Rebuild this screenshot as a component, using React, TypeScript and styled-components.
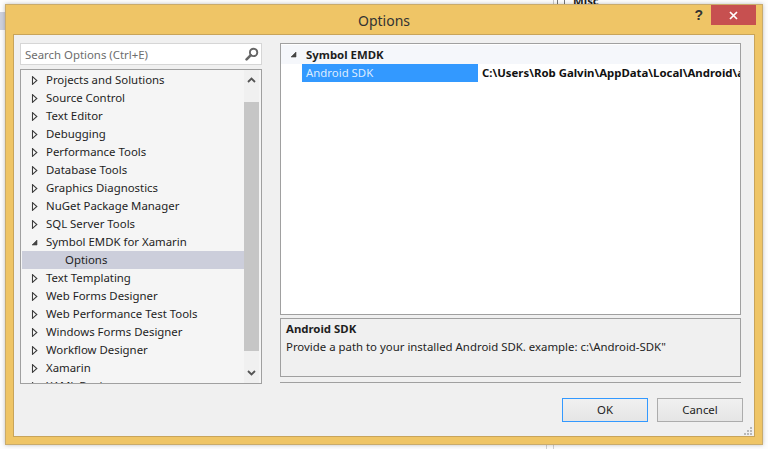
// @ts-nocheck
import React from 'react';
import styled, {createGlobalStyle} from 'styled-components';

const GlobalStyle = createGlobalStyle`
  html, body {
    margin: 0;
    padding: 0;
    background: #fdfdfd;
    overflow: hidden;
  }
  body {
    font-family: "Noto Sans", "Open Sans", sans-serif;
    font-size: 11.4px;
    color: #1e1e1e;
  }
`;

const treeItems = [
    {label: 'Projects and Solutions'},
    {label: 'Source Control'},
    {label: 'Text Editor'},
    {label: 'Debugging'},
    {label: 'Performance Tools'},
    {label: 'Database Tools'},
    {label: 'Graphics Diagnostics'},
    {label: 'NuGet Package Manager'},
    {label: 'SQL Server Tools'},
    {label: 'Symbol EMDK for Xamarin', open: true},
    {label: 'Options', child: true},
    {label: 'Text Templating'},
    {label: 'Web Forms Designer'},
    {label: 'Web Performance Test Tools'},
    {label: 'Windows Forms Designer'},
    {label: 'Workflow Designer'},
    {label: 'Xamarin'},
    {label: 'XAML Designer'},
];

const Arrow = ({open}) => open
    ? <ArrowSvg viewBox="0 0 7 9"><path d="M1 7 L6 2 L6 7 Z" fill="#444" stroke="#444" strokeWidth="0.6"/></ArrowSvg>
    : <ArrowSvg viewBox="0 0 7 9"><path d="M1.5 0.7 L5.8 4.5 L1.5 8.3 Z" fill="#fdfdfd" stroke="#3c3c3c" strokeWidth="1.1"/></ArrowSvg>;

const SearchIcon = () => (
    <SearchSvg viewBox="0 0 14 14">
        <circle cx="8.6" cy="5.4" r="3.7" fill="none" stroke="#666" strokeWidth="1.9"/>
        <path d="M5.8 8.2 L1.6 12.4" stroke="#666" strokeWidth="2.6" strokeLinecap="round"/>
    </SearchSvg>
);

const Chevron = ({down}) => (
    <ChevronSvg viewBox="0 0 9 6">
        <path d={down ? 'M1 1 L4.5 4.5 L8 1' : 'M1 5 L4.5 1.5 L8 5'} fill="none" stroke="#555" strokeWidth="1.8"/>
    </ChevronSvg>
);

const Grip = () => (
    <GripSvg viewBox="0 0 8 8">
        {[[6, 0], [3, 3], [6, 3], [0, 6], [3, 6], [6, 6]].map(([x, y], k) =>
            <rect key={k} x={x} y={y} width="2" height="2" fill="#b8b8b8"/>)}
    </GripSvg>
);

const App = () => (
    <Page>
        <GlobalStyle/>
        <BackdropTab/>
        <BackdropMisc>
            <MiscBox/>
            <MiscText>Misc</MiscText>
        </BackdropMisc>
        <BackdropLines/>
        <Window>
            <TitleBar>
                <span/>
                <Title>Options</Title>
                <Controls>
                    <HelpButton>?</HelpButton>
                    <CloseButton>
                        <svg width="9" height="9" viewBox="0 0 9 9">
                            <path d="M1 1 L8 8 M8 1 L1 8" stroke="#fff" strokeWidth="1.7"/>
                        </svg>
                    </CloseButton>
                </Controls>
            </TitleBar>
            <Content>
                <Body>
                    <LeftColumn>
                        <SearchBox>
                            <SearchHint>Search Options (Ctrl+E)</SearchHint>
                            <SearchIcon/>
                        </SearchBox>
                        <Tree>
                            <TreeRows>
                                {treeItems.map(item =>
                                    <TreeRow key={item.label} $child={item.child}>
                                        {!item.child && <Arrow open={item.open}/>}
                                        {item.label}
                                    </TreeRow>)}
                            </TreeRows>
                            <ScrollBar>
                                <ScrollUp><Chevron/></ScrollUp>
                                <ScrollThumb/>
                                <ScrollDown><Chevron down/></ScrollDown>
                            </ScrollBar>
                        </Tree>
                    </LeftColumn>
                    <RightColumn>
                        <PropertyPanel>
                            <CategoryRow>
                                <Arrow open/>
                                Symbol EMDK
                            </CategoryRow>
                            <PropertyRow>
                                <PropertyName>Android SDK</PropertyName>
                                <PropertyValue>C:\Users\Rob Galvin\AppData\Local\Android\a</PropertyValue>
                            </PropertyRow>
                        </PropertyPanel>
                        <Description>
                            <DescriptionTitle>Android SDK</DescriptionTitle>
                            <div>Provide a path to your installed Android SDK. example: c:\Android-SDK"</div>
                        </Description>
                        <Separator/>
                    </RightColumn>
                </Body>
                <Footer>
                    <DialogButton $primary>OK</DialogButton>
                    <DialogButton>Cancel</DialogButton>
                </Footer>
                <Grip/>
            </Content>
        </Window>
    </Page>
);

const Page = styled.div`
  position: relative;
  width: 768px;
  height: 449px;
  overflow: hidden;
  padding: 4px 0 0 5px;
  box-sizing: border-box;
`;

const BackdropTab = styled.div`
  position: absolute;
  left: 0;
  top: 12px;
  width: 5px;
  height: 18px;
  background: #cdd0dc;
`;

const BackdropMisc = styled.div`
  position: absolute;
  left: 553px;
  top: 0;
  height: 4px;
  width: 120px;
  overflow: hidden;
  border-left: 1px solid #c8c8c8;
  display: flex;
  align-items: flex-start;
  gap: 8px;
  padding-left: 3px;
`;

const MiscBox = styled.div`
  width: 6px;
  height: 9px;
  margin-top: -5px;
  border: 1px solid #777;
  flex: none;
`;

const MiscText = styled.div`
  font-weight: 700;
  line-height: 12px;
  margin-top: -5px;
`;

const BackdropLines = styled.div`
  position: absolute;
  left: 546px;
  top: 445px;
  width: 6px;
  height: 4px;
  border-left: 1px solid #d0d0d0;
  border-right: 1px solid #d0d0d0;
`;

const Window = styled.div`
  position: relative;
  width: 758px;
  height: 441px;
  box-sizing: border-box;
  background: #efc566;
  border: 1px solid #c9ab6c;
  box-shadow: 0 0 4px rgba(0, 0, 0, 0.25);
  padding: 0 7px 7px 7px;
  display: flex;
  flex-direction: column;
`;

const TitleBar = styled.div`
  height: 29px;
  flex: none;
  display: grid;
  grid-template-columns: 1fr auto 1fr;
`;

const Title = styled.div`
  font-size: 14px;
  line-height: 31px;
  color: #333;
`;

const Controls = styled.div`
  display: flex;
  justify-content: flex-end;
  align-items: flex-start;
  margin-right: -1px;
`;

const HelpButton = styled.div`
  font-family: "Liberation Sans", sans-serif;
  font-weight: 700;
  font-size: 14px;
  line-height: 20px;
  color: #333;
  margin-right: 8px;
`;

const CloseButton = styled.div`
  width: 45px;
  height: 20px;
  background: #c75050;
  display: flex;
  align-items: center;
  justify-content: center;
`;

const Content = styled.div`
  position: relative;
  flex: 1;
  background: #f0f0f0;
  border: 1px solid #c8a45a;
  padding: 8px 11px 0 6px;
  display: flex;
  flex-direction: column;
`;

const Body = styled.div`
  display: flex;
  gap: 18px;
`;

const LeftColumn = styled.div`
  width: 242px;
  display: flex;
  flex-direction: column;
  gap: 4px;
`;

const SearchBox = styled.div`
  height: 22px;
  box-sizing: border-box;
  background: #fff;
  border: 1px solid #d6d6d6;
  display: flex;
  align-items: center;
  justify-content: space-between;
  padding: 0 2px 0 4px;
`;

const SearchHint = styled.span`
  color: #6d6d6d;
`;

const SearchSvg = styled.svg`
  width: 14px;
  height: 14px;
`;

const Tree = styled.div`
  height: 315px;
  box-sizing: border-box;
  border: 1px solid #a0a0a0;
  background: #f5f5f5;
  display: flex;
  overflow: hidden;
`;

const TreeRows = styled.div`
  flex: 1;
  min-width: 0;
  padding: 1px 0 0 1px;
`;

const TreeRow = styled.div`
  height: 18px;
  line-height: 18px;
  white-space: nowrap;
  display: flex;
  align-items: center;
  padding-left: ${p => p.$child ? '43px' : '9px'};
  background: ${p => p.$child ? '#cccedb' : 'transparent'};
`;

const ArrowSvg = styled.svg`
  width: 7px;
  height: 9px;
  flex: none;
  margin-right: 8px;
`;

const ScrollBar = styled.div`
  width: 15px;
  margin-right: 2px;
  display: flex;
  flex-direction: column;
  background: #f0f0f0;
`;

const ScrollUp = styled.div`
  height: 32px;
  display: flex;
  justify-content: center;
  padding-top: 7px;
  box-sizing: border-box;
`;

const ScrollDown = styled.div`
  height: 32px;
  display: flex;
  justify-content: center;
  align-items: flex-end;
  padding-bottom: 7px;
  box-sizing: border-box;
`;

const ChevronSvg = styled.svg`
  width: 9px;
  height: 6px;
`;

const ScrollThumb = styled.div`
  flex: 1;
  background: #c6c6c6;
`;

const RightColumn = styled.div`
  width: 461px;
  display: flex;
  flex-direction: column;
`;

const PropertyPanel = styled.div`
  height: 272px;
  box-sizing: border-box;
  border: 1px solid #a0a0a0;
  background: #fff;
  padding-top: 1px;
  overflow: hidden;
`;

const CategoryRow = styled.div`
  height: 19px;
  display: flex;
  align-items: center;
  padding-left: 9px;
  font-weight: 700;
  background: #f5f7fb;

  svg { margin-right: 9px; }
`;

const PropertyRow = styled.div`
  height: 18px;
  line-height: 18px;
  display: flex;
  white-space: nowrap;
  margin-left: 21px;
`;

const PropertyName = styled.div`
  width: 176px;
  flex: none;
  box-sizing: border-box;
  padding-left: 4px;
  background: #3399ff;
  color: #dcecff;
`;

const PropertyValue = styled.div`
  padding-left: 4px;
  font-weight: 700;
  color: #111;
`;

const Description = styled.div`
  height: 59px;
  box-sizing: border-box;
  margin-top: 3px;
  border: 1px solid #a0a0a0;
  padding: 1px 5px;
  line-height: 18px;
`;

const DescriptionTitle = styled.div`
  font-weight: 700;
`;

const Separator = styled.div`
  height: 1px;
  margin-top: 5px;
  background: #a0a0a0;
`;

const Footer = styled.div`
  display: flex;
  justify-content: flex-end;
  gap: 9px;
  margin-top: 14px;
`;

const DialogButton = styled.div`
  width: 86px;
  height: 24px;
  box-sizing: border-box;
  border: 1px solid ${p => p.$primary ? '#3399ff' : '#acacac'};
  background: linear-gradient(#f0f0f0, #e5e5e5);
  text-align: center;
  line-height: 22px;
  color: #222;
`;

const GripSvg = styled.svg`
  position: absolute;
  right: 2px;
  bottom: 1px;
  width: 8px;
  height: 8px;
`;

export default App;
